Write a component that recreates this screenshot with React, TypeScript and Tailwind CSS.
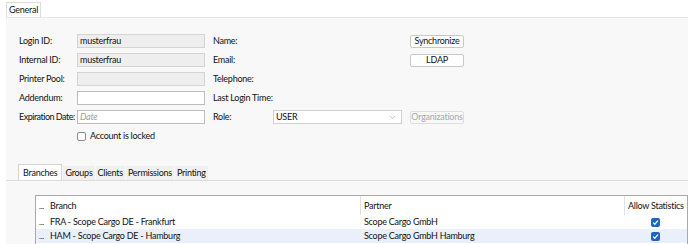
import { ChevronDown } from 'lucide-react'

const fieldRows = [
  { label: 'Login ID:', value: 'musterfrau', disabled: true, right: 'Name:', button: 'Synchronize' },
  { label: 'Internal ID:', value: 'musterfrau', disabled: true, right: 'Email:', button: 'LDAP' },
  { label: 'Printer Pool:', value: '', disabled: true, right: 'Telephone:' },
  { label: 'Addendum:', value: '', disabled: false, right: 'Last Login Time:' },
]

const branches = [
  { branch: 'FRA - Scope Cargo DE - Frankfurt', partner: 'Scope Cargo GmbH', selected: false },
  { branch: 'HAM - Scope Cargo DE - Hamburg', partner: 'Scope Cargo GmbH Hamburg', selected: true },
]

function CheckedBox() {
  return (
    <span className="flex h-[9px] w-[9px] items-center justify-center rounded-[2px] bg-[#1f63c6]">
      <svg width="7" height="7" viewBox="0 0 8 8">
        <path d="M1.3 4.2 3.2 6 6.8 1.8" fill="none" stroke="white" strokeWidth="1.4" />
      </svg>
    </span>
  )
}

export default function App() {
  return (
    <main
      className="flex h-[244px] w-[688px] flex-col overflow-hidden whitespace-nowrap bg-white text-[9px] tracking-[-0.25px] text-[#111]"
      style={{ fontFamily: 'Lato, "Open Sans", sans-serif' }}
    >
      {/* top tab strip */}
      <div className="flex h-[17px] items-end pl-[6px]">
        <div className="flex h-[15px] items-center border border-b-0 border-[#dcdcdc] bg-white px-[2px]">General</div>
      </div>

      <div className="ml-[6px] flex flex-1 flex-col border-t border-[#e6e6e6] bg-[#f8f8f8]">
        {/* user form */}
        <div className="flex flex-col gap-[5px] pl-[13px] pt-[16px]">
          {fieldRows.map((row) => (
            <div key={row.label} className="flex h-[14px] items-center">
              <span className="w-[58px]">{row.label}</span>
              <div
                className={`flex h-[14px] w-[128px] items-center border px-[2px] ${
                  row.disabled ? 'border-[#d4d4d4] bg-[#eeeeee]' : 'border-[#bdbdbd] bg-white'
                }`}
              >
                {row.value}
              </div>
              <span className="ml-[8px] w-[197px]">{row.right}</span>
              {row.button && (
                <button className="flex h-[13px] w-[54px] items-center justify-center rounded-[2px] border border-[#c8c8c8] bg-white">
                  {row.button}
                </button>
              )}
            </div>
          ))}
          <div className="flex h-[14px] items-center">
            <span className="w-[58px] tracking-[-0.5px]">Expiration Date:</span>
            <div className="flex h-[14px] w-[128px] items-center border border-[#bdbdbd] bg-white px-[2px] italic text-[#a0a0a0]">
              Date
            </div>
            <span className="ml-[8px] w-[60px]">Role:</span>
            <div className="flex h-[14px] w-[129px] items-center justify-between border border-[#d0d0d0] bg-white px-[2px]">
              <span>USER</span>
              <ChevronDown size={9} strokeWidth={1.5} className="mr-[2px] text-[#999]" />
            </div>
            <button className="ml-[8px] flex h-[13px] w-[54px] items-center justify-center rounded-[2px] border border-[#dedede] bg-[#f8f8f8] text-[#a8a8a8]">
              Organizations
            </button>
          </div>
          <label className="ml-[58px] flex h-[14px] items-center gap-[4px]">
            <span className="h-[9px] w-[9px] rounded-[2px] border border-[#8c8c8c] bg-white" />
            Account is locked
          </label>
        </div>

        {/* lower tabs */}
        <div className="mt-[21px] flex items-end gap-px border-b border-[#dcdcdc] pl-[12px]">
          <div className="flex h-[16px] items-center border border-b-0 border-[#d4d4d4] bg-white px-[4px]">Branches</div>
          <div className="flex h-[14px] items-center bg-[#f0f0f0] px-[2px]">Groups</div>
          <div className="flex h-[14px] items-center bg-[#f0f0f0] px-[2px]">Clients</div>
          <div className="flex h-[14px] items-center bg-[#f0f0f0] px-[2px]">Permissions</div>
          <div className="flex h-[14px] items-center bg-[#f0f0f0] px-[2px]">Printing</div>
        </div>

        {/* branches table */}
        <div className="ml-[29px] mt-[14px] flex flex-1 flex-col border-l border-t border-r border-[#a9a9a9] bg-white">
          <div className="flex h-[19px] items-center">
            <span className="w-[10px] pl-[3px] text-[8px]">...</span>
            <span className="w-[314px] pl-[4px]">Branch</span>
            <span className="h-full w-[264px] border-l border-[#e0e0e0] pl-[3px] leading-[19px]">Partner</span>
            <span className="h-full flex-1 border-l border-[#e0e0e0] pl-[3px] leading-[19px]">Allow Statistics</span>
          </div>
          {branches.map((b) => (
            <div key={b.branch} className={`flex h-[14px] items-center ${b.selected ? 'bg-[#e9f0fb]' : ''}`}>
              <span className="w-[10px] pl-[3px] text-[8px]">...</span>
              <span className="w-[314px] pl-[4px]">{b.branch}</span>
              <span className="w-[264px] pl-[4px]">{b.partner}</span>
              <span className="flex flex-1 justify-center">
                <CheckedBox />
              </span>
            </div>
          ))}
        </div>
      </div>
    </main>
  )
}
